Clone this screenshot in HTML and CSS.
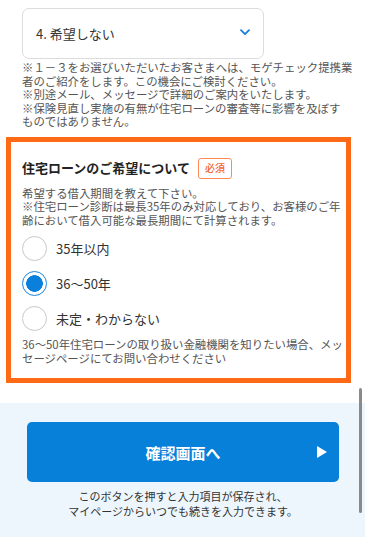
FILE: index.html
```html
<!DOCTYPE html>
<html lang="ja">
<head>
<meta charset="utf-8">
<link rel="stylesheet" href="styles.css">
</head>
<body>
<div class="page">
  <div class="top">
    <div class="select">
      <span class="select-text">4. 希望しない</span>
      <svg class="chev" width="10" height="7" viewBox="0 0 10 7"><path d="M1 1.2 L5 5.2 L9 1.2" fill="none" stroke="#1a7fd6" stroke-width="1.8" stroke-linecap="round" stroke-linejoin="round"/></svg>
    </div>
    <p class="notes">※１－３をお選びいただいたお客さまへは、モゲチェック提携業<br>者のご紹介をします。この機会にご検討ください。<br>※別途メール、メッセージで詳細のご案内をいたします。<br>※保険見直し実施の有無が住宅ローンの審査等に影響を及ぼす<br>ものではありません。</p>
  </div>

  <section class="box">
    <div class="title-row">
      <h2 class="title">住宅ローンのご希望について</h2>
      <span class="badge">必須</span>
    </div>
    <p class="desc">希望する借入期間を教えて下さい。<br>※住宅ローン診断は最長35年のみ対応しており、お客様のご年<br>齢において借入可能な最長期間にて計算されます。</p>
    <ul class="radios">
      <li class="radio"><span class="circle"></span><span class="label">35年以内</span></li>
      <li class="radio"><span class="circle checked"></span><span class="label">36〜50年</span></li>
      <li class="radio"><span class="circle"></span><span class="label">未定・わからない</span></li>
    </ul>
    <p class="desc bottom">36〜50年住宅ローンの取り扱い金融機関を知りたい場合、メッ<br>セージページにてお問い合わせください</p>
  </section>

  <div class="footer">
    <button class="cta">確認画面へ<svg class="tri" width="10" height="12" viewBox="0 0 10 12"><path d="M0 0 L10 6 L0 12 Z" fill="#fff"/></svg></button>
    <p class="caption">このボタンを押すと入力項目が保存され、<br>マイページからいつでも続きを入力できます。</p>
  </div>
  <div class="scrollbar"></div>
</div>
</body>
</html>
```

FILE: styles.css
```css
* { box-sizing: border-box; }
html, body { margin: 0; padding: 0; background: #fff; }
body {
  font-family: "Noto Sans CJK JP", "Noto Sans", sans-serif;
  color: #333;
}
.page {
  position: relative;
  width: 365px;
  height: 537px;
  overflow: hidden;
}
.top {
  padding: 8px 0 0 22px;
}
.select {
  width: 242px;
  height: 51px;
  border: 1px solid #dcdcdc;
  border-radius: 7px;
  display: flex;
  align-items: center;
  justify-content: space-between;
  padding: 0 13px 0 13px;
}
.select-text {
  font-size: 13px;
  color: #333;
  line-height: 1;
}
.chev { display: block; margin-top: -2px; }
.notes {
  margin: 2px 0 0;
  font-size: 11.4px;
  line-height: 13.5px;
  color: #555;
  white-space: nowrap;
}
.box {
  margin: 8px 0 0 6px;
  width: 345px;
  border: 5px solid #ff6a17;
  padding: 16px 0 13px 11px;
}
.title-row {
  display: flex;
  align-items: center;
  gap: 8px;
  height: 21px;
}
.title {
  margin: 0;
  font-size: 13px;
  font-weight: 700;
  color: #222;
  line-height: 1;
  margin-top: -2px;
}
.badge {
  width: 34px;
  height: 21px;
  border: 1px solid #ff8a55;
  border-radius: 3px;
  color: #f0652a;
  font-size: 10px;
  line-height: 1;
  display: flex;
  align-items: center;
  justify-content: center;
  font-weight: 500;
}
.desc {
  margin: 8px 0 0;
  font-size: 11.4px;
  line-height: 13.5px;
  color: #555;
  white-space: nowrap;
}
.radios {
  list-style: none;
  margin: 9px 0 0;
  padding: 0;
  display: flex;
  flex-direction: column;
  gap: 10px;
}
.radio {
  display: flex;
  align-items: center;
  gap: 9px;
  height: 25px;
}
.circle {
  width: 25px;
  height: 25px;
  border-radius: 50%;
  border: 1px solid #c8c8c8;
  background: #fff;
  flex: none;
}
.circle.checked {
  border: 1.5px solid #1a86e0;
  background: radial-gradient(circle, #0a7fdc 0, #0a7fdc 8px, #fff 8.6px);
}
.label {
  font-size: 13px;
  color: #333;
  line-height: 1;
}
.desc.bottom {
  margin-top: 7px;
}
.footer {
  margin-top: 20px;
  background: #eef6fd;
  padding: 19px 26px 30px 27px;
}
.cta {
  position: relative;
  width: 312px;
  height: 60px;
  border: none;
  border-radius: 5px;
  background: #0780d9;
  color: #fff;
  font-family: inherit;
  font-size: 15px;
  font-weight: 700;
  display: flex;
  align-items: center;
  justify-content: center;
  padding: 0;
}
.tri {
  position: absolute;
  right: 12px;
  top: 24px;
}
.caption {
  margin: 7px 0 0;
  text-align: center;
  font-size: 11px;
  line-height: 15px;
  color: #333;
  white-space: nowrap;
}
.scrollbar {
  position: absolute;
  left: 359px;
  top: 388px;
  width: 3px;
  height: 125px;
  border-radius: 2px;
  background: #8a8a8a;
}
```
